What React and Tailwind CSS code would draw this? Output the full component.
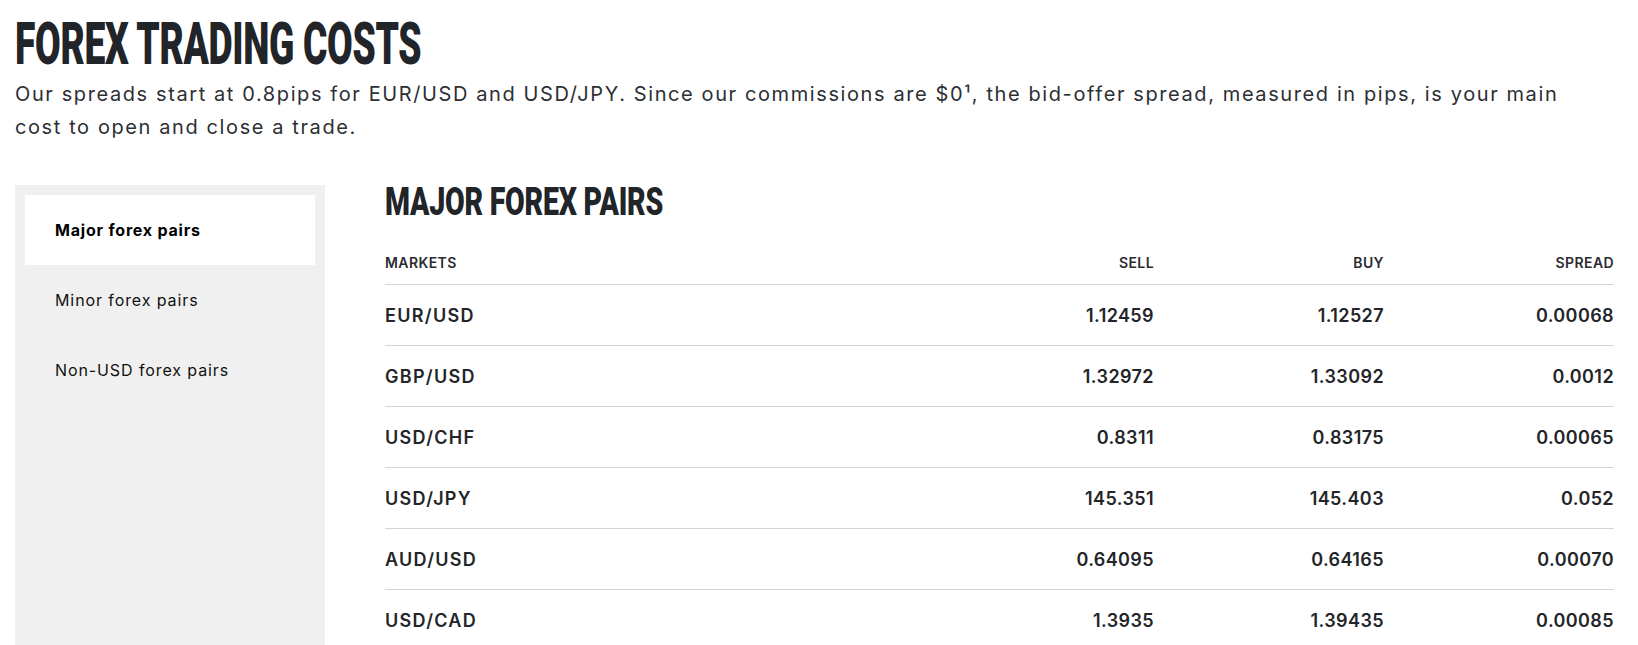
import React from 'react';

const tabs = ['Major forex pairs', 'Minor forex pairs', 'Non-USD forex pairs'];

const pairs = [
  { market: 'EUR/USD', sell: '1.12459', buy: '1.12527', spread: '0.00068' },
  { market: 'GBP/USD', sell: '1.32972', buy: '1.33092', spread: '0.0012' },
  { market: 'USD/CHF', sell: '0.8311', buy: '0.83175', spread: '0.00065' },
  { market: 'USD/JPY', sell: '145.351', buy: '145.403', spread: '0.052' },
  { market: 'AUD/USD', sell: '0.64095', buy: '0.64165', spread: '0.00070' },
  { market: 'USD/CAD', sell: '1.3935', buy: '1.39435', spread: '0.00085' },
];

export default function App() {
  return (
    <div className="w-[1638px] h-[645px] overflow-hidden bg-white px-[15px] font-['Inter',sans-serif] text-[#232529]">
      {/* heading */}
      <h1 className="mt-[14px] origin-left scale-x-[0.631] font-['Roboto',sans-serif] font-black text-[59px] leading-none tracking-[-0.5px] text-[#212428] whitespace-nowrap">
        FOREX TRADING COSTS
      </h1>
      <p className="mt-[5px] text-[20px] leading-[33px] tracking-[1.6px] text-[#2c2f34] whitespace-nowrap">
        Our spreads start at 0.8pips for EUR/USD and USD/JPY. Since our commissions are $0¹, the bid-offer spread, measured in pips, is your main
        <br />
        cost to open and close a trade.
      </p>

      <div className="mt-[41px] flex items-start">
        {/* sidebar tabs */}
        <nav className="w-[310px] h-[520px] shrink-0 bg-[#f0f0f0] p-[10px]">
          {tabs.map((t, i) => (
            <div
              key={t}
              className={
                i === 0
                  ? 'h-[70px] flex items-center pl-[30px] bg-white text-[16px] tracking-[0.8px] font-bold text-black'
                  : 'h-[70px] flex items-center pl-[30px] text-[16px] tracking-[0.9px] text-[#111]'
              }
            >
              {t}
            </div>
          ))}
        </nav>

        {/* table */}
        <section className="ml-[60px] w-[1229px]">
          <h2 className="origin-left scale-x-[0.731] font-['Roboto',sans-serif] font-black text-[39px] leading-[35px] tracking-[-0.3px] text-[#212428] whitespace-nowrap">
            MAJOR FOREX PAIRS
          </h2>

          <div className="grid grid-cols-[539px_230px_230px_230px] pt-[33px] pb-[11px] border-b border-[#d4d4d4] text-[14px] leading-[20px] tracking-[0.4px] font-semibold uppercase text-[#2a2c30]">
            <div>Markets</div>
            <div className="text-right">Sell</div>
            <div className="text-right">Buy</div>
            <div className="text-right">Spread</div>
          </div>

          {pairs.map(p => (
            <div
              key={p.market}
              className="grid grid-cols-[539px_230px_230px_230px] items-center h-[61px] pt-[2px] border-b border-[#d4d4d4] text-[18px] leading-[28px] tracking-[0.4px] font-semibold text-[#232529]"
            >
              <div className="tracking-[1.3px]">{p.market}</div>
              <div className="text-right">{p.sell}</div>
              <div className="text-right">{p.buy}</div>
              <div className="text-right">{p.spread}</div>
            </div>
          ))}
        </section>
      </div>
    </div>
  );
}
